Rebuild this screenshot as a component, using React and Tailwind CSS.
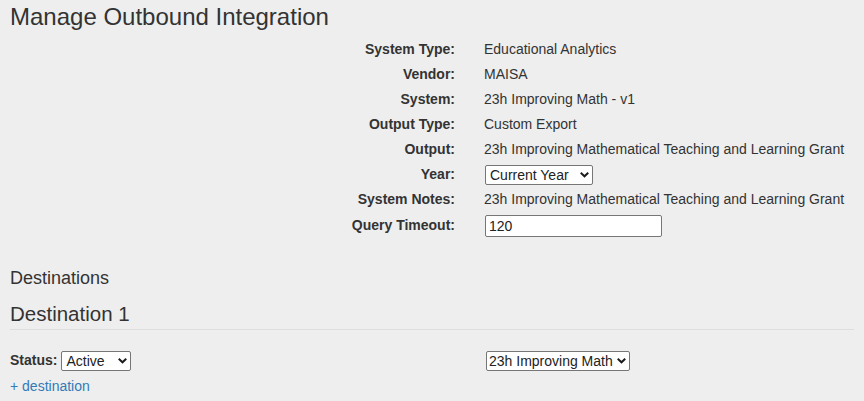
import React from 'react';

const rows = [
    { label: 'System Type:', value: 'Educational Analytics' },
    { label: 'Vendor:', value: 'MAISA' },
    { label: 'System:', value: '23h Improving Math - v1' },
    { label: 'Output Type:', value: 'Custom Export' },
    { label: 'Output:', value: '23h Improving Mathematical Teaching and Learning Grant' },
    { label: 'Year:', select: { value: 'Current Year', width: 'w-[108px]' } },
    { label: 'System Notes:', value: '23h Improving Mathematical Teaching and Learning Grant' },
];

const Chevron = () => (
    <svg className="w-[9px] h-[6px]" viewBox="0 0 9 6" fill="none" stroke="#1a1a1a" strokeWidth="2" strokeLinecap="square">
        <path d="M1.5 1.5L4.5 4.3L7.5 1.5" />
    </svg>
);

// native select, styled flat, with our own chevron laid over it
const Select = ({ value, width, pad = 'pl-[4px] pr-[16px]' }) => (
    <div className={`relative ${width} h-[20px]`}>
        <select
            defaultValue={value}
            className={`appearance-none w-full h-full bg-white border border-[#767676] rounded-[2px] ${pad} text-[14px] leading-[18px] text-[#222] outline-none`}
        >
            <option>{value}</option>
        </select>
        <span className="pointer-events-none absolute right-[4px] top-[7px] flex">
            <Chevron />
        </span>
    </div>
);

const App = () => {
    return (
        <div className="min-h-screen bg-[#eeeeee] px-[10px] text-[#333] text-[14px]" style={{ fontFamily: '"Liberation Sans", Arial, sans-serif' }}>
            <h1 className="pt-[3px] text-[24px] leading-[27px] font-normal">Manage Outbound Integration</h1>

            {/* Details */}
            <div className="mt-[7px]">
                {rows.map((r) => (
                    <div key={r.label} className="flex items-center h-[25px]">
                        <div className="w-[445px] text-right font-bold">{r.label}</div>
                        <div className="pl-[29px]">
                            {r.select ? (
                                <div className="ml-[1px]"><Select value={r.select.value} width={r.select.width} /></div>
                            ) : (
                                r.value
                            )}
                        </div>
                    </div>
                ))}
                <div className="flex items-center h-[27px]">
                    <div className="w-[445px] text-right font-bold">Query Timeout:</div>
                    <div className="pl-[29px]">
                        <input
                            defaultValue="120"
                            className="ml-[1px] w-[177px] h-[22px] bg-white border border-[#767676] rounded-[2px] px-[3px] text-[14px] text-[#222] outline-none"
                        />
                    </div>
                </div>
            </div>

            {/* Destinations */}
            <h2 className="mt-[29px] text-[18px] leading-[20px] font-normal">Destinations</h2>
            <div className="mt-[15px] pb-[4px] border-b border-[#dedede]">
                <h3 className="text-[20.5px] leading-[22px] font-normal">Destination 1</h3>
            </div>

            <div className="mt-[20px] flex items-center">
                <div className="w-[476px] flex items-center">
                    <span className="font-bold mr-[4px]">Status:</span>
                    <Select value="Active" width="w-[70px]" />
                </div>
                <Select value="23h Improving Math" width="w-[144px]" pad="pl-[2px] pr-[13px]" />
            </div>

            <a href="#" className="block mt-[7px] text-[#337ab7] leading-[16px]">+ destination</a>
        </div>
    );
};

export default App;
